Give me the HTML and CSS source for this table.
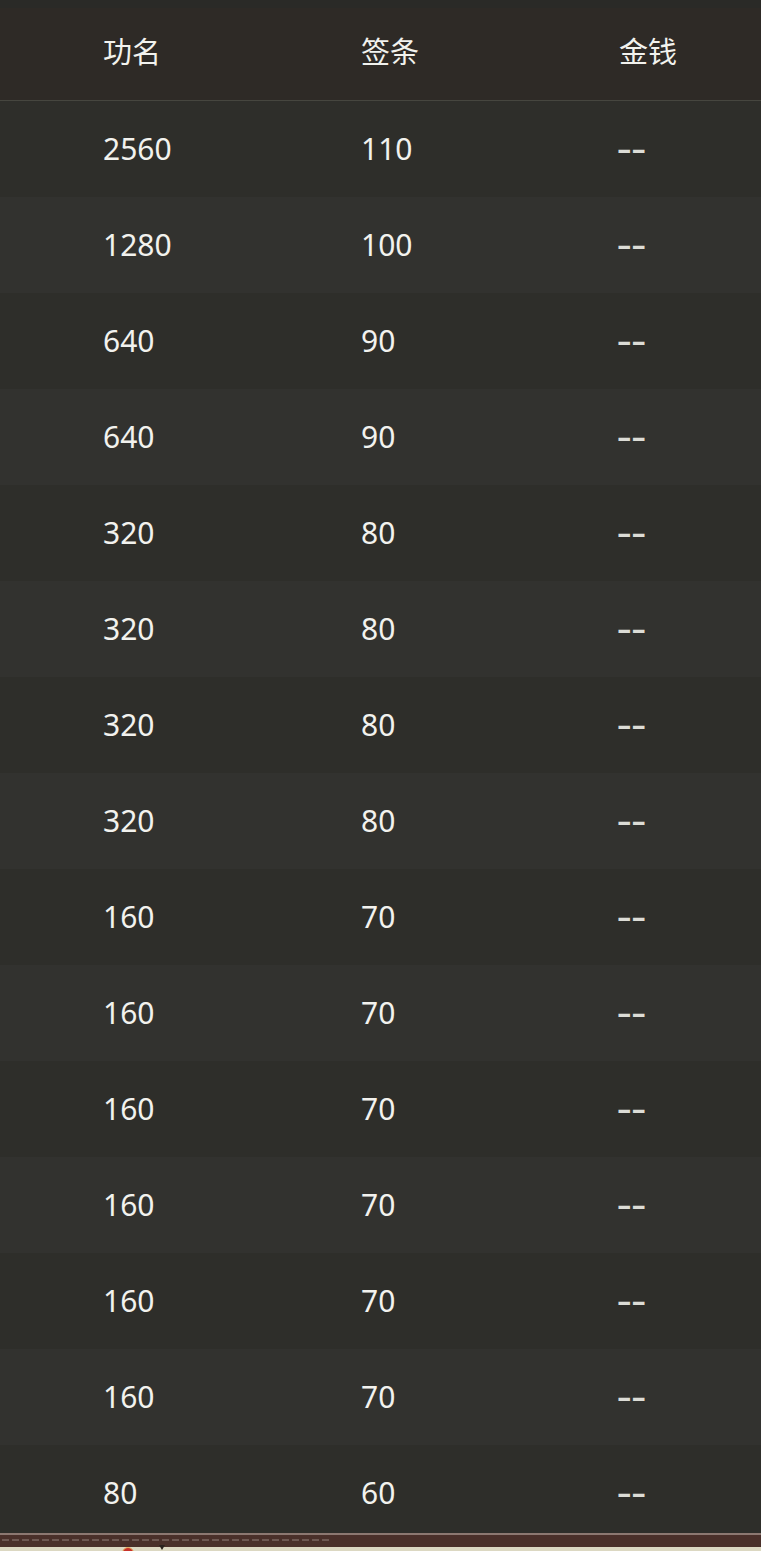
FILE: index.html
```html
<!DOCTYPE html>
<html lang="zh-CN">
<head>
    <meta charset="UTF-8">
    <meta name="viewport" content="width=device-width, initial-scale=1.0">
    <title>功名签条</title>
    <link rel="stylesheet" href="styles.css">
</head>
<body>
    <div class="top-strip"></div>

    <div class="table-wrap">
        <div class="row head">
            <div class="cell">功名</div>
            <div class="cell">签条</div>
            <div class="cell">金钱</div>
        </div>
        <div class="row"><div class="cell">2560</div><div class="cell">110</div><div class="cell"><span class="dash">--</span></div></div>
        <div class="row"><div class="cell">1280</div><div class="cell">100</div><div class="cell"><span class="dash">--</span></div></div>
        <div class="row"><div class="cell">640</div><div class="cell">90</div><div class="cell"><span class="dash">--</span></div></div>
        <div class="row"><div class="cell">640</div><div class="cell">90</div><div class="cell"><span class="dash">--</span></div></div>
        <div class="row"><div class="cell">320</div><div class="cell">80</div><div class="cell"><span class="dash">--</span></div></div>
        <div class="row"><div class="cell">320</div><div class="cell">80</div><div class="cell"><span class="dash">--</span></div></div>
        <div class="row"><div class="cell">320</div><div class="cell">80</div><div class="cell"><span class="dash">--</span></div></div>
        <div class="row"><div class="cell">320</div><div class="cell">80</div><div class="cell"><span class="dash">--</span></div></div>
        <div class="row"><div class="cell">160</div><div class="cell">70</div><div class="cell"><span class="dash">--</span></div></div>
        <div class="row"><div class="cell">160</div><div class="cell">70</div><div class="cell"><span class="dash">--</span></div></div>
        <div class="row"><div class="cell">160</div><div class="cell">70</div><div class="cell"><span class="dash">--</span></div></div>
        <div class="row"><div class="cell">160</div><div class="cell">70</div><div class="cell"><span class="dash">--</span></div></div>
        <div class="row"><div class="cell">160</div><div class="cell">70</div><div class="cell"><span class="dash">--</span></div></div>
        <div class="row"><div class="cell">160</div><div class="cell">70</div><div class="cell"><span class="dash">--</span></div></div>
        <div class="row"><div class="cell">80</div><div class="cell">60</div><div class="cell"><span class="dash">--</span></div></div>
    </div>

    <div class="footer-bar">
        <div class="bar-line"></div>
        <div class="bar-body"><div class="bar-dashes"></div></div>
        <div class="bar-base">
            <span class="dot"></span>
            <span class="notch"></span>
        </div>
    </div>
</body>
</html>
```

FILE: styles.css
```css
/* Base */
* {
    margin: 0;
    padding: 0;
    box-sizing: border-box;
}

body {
    background: #2a2a27;
    color: #f2f2ee;
    font-family: 'Noto Sans', 'Noto Sans CJK SC', sans-serif;
    height: 1551px;
    overflow: hidden;
}

.top-strip {
    height: 8px;
    background: #2a2a27;
}

/* Table */
.table-wrap {
    height: 1525px;
    overflow: hidden;
}

.row {
    display: grid;
    grid-template-columns: 258px 258px 1fr;
    align-items: center;
    padding-left: 103px;
    height: 96px;
    font-size: 30px;
    line-height: 1;
    background: #2e2e2a;
}

.row:nth-child(odd) {
    background: #32322f;
}

.row.head {
    height: 93px;
    padding-bottom: 7px;
    background: #2e2a26;
    border-bottom: 1px solid #46463f;
    font-size: 29px;
    font-family: 'Noto Sans CJK SC', sans-serif;
}

.dash {
    display: inline-block;
    color: #dcdcd6;
    font-weight: 600;
    transform: scaleX(1.5);
    transform-origin: left center;
    margin-left: -2px;
    margin-top: -2px;
}

/* Bottom bar */
.footer-bar {
    height: 18px;
}

.bar-line {
    height: 2px;
    background: #8c7871;
}

.bar-body {
    height: 12px;
    background: #4a302a;
    padding: 4px 2px 0;
}

.bar-dashes {
    width: 330px;
    height: 2px;
    background: repeating-linear-gradient(90deg, #6e5852 0 7px, transparent 7px 10px);
}

.bar-base {
    height: 4px;
    background: #dcd8c2;
    position: relative;
}

.dot {
    position: absolute;
    left: 122px;
    top: 0;
    width: 12px;
    height: 12px;
    border-radius: 50%;
    background: #c8322a;
    border: 1px solid #e8b060;
}

.notch {
    position: absolute;
    left: 159px;
    top: -2px;
    border-left: 3px solid transparent;
    border-right: 3px solid transparent;
    border-top: 5px solid #2a221e;
}
```
